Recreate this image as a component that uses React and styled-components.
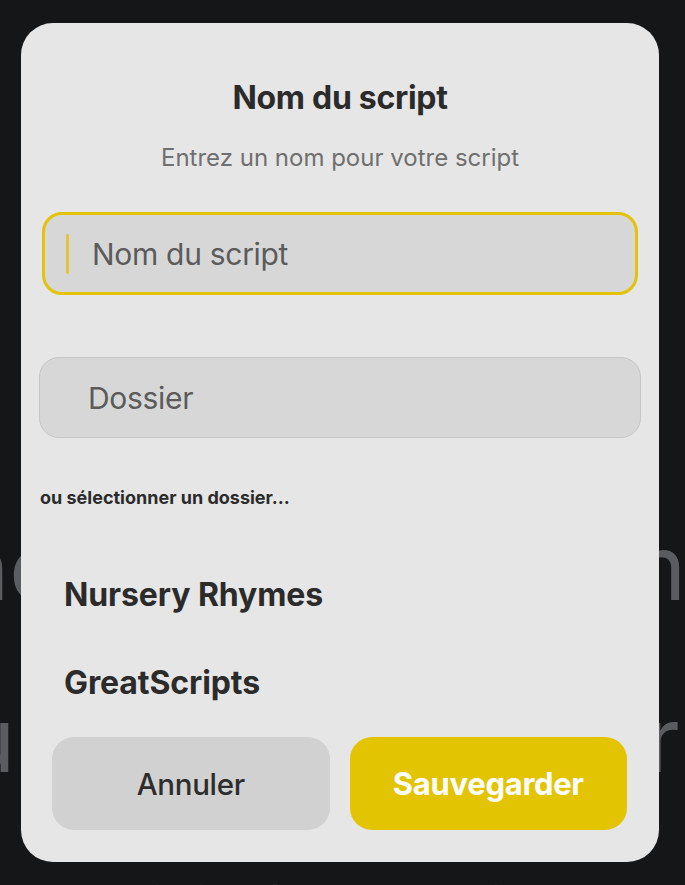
import React from 'react';
import styled, { createGlobalStyle } from 'styled-components';

const GlobalStyle = createGlobalStyle`
  html, body {
    margin: 0;
    padding: 0;
    background: #151618;
  }
  * {
    box-sizing: border-box;
  }
`;

const Screen = styled.div`
  position: relative;
  width: 685px;
  height: 885px;
  overflow: hidden;
  background: #151618;
  font-family: Inter, 'Noto Sans', sans-serif;
`;

// page content sitting under the dialog, only its edges show
const Behind = styled.div`
  position: absolute;
  inset: 0;
  display: flex;
  flex-direction: column;
  align-items: center;
  padding-top: 482px;
  color: #5b5c5f;
  white-space: nowrap;
`;

const BehindLine = styled.div`
  font-size: ${p => p.size || 90}px;
  line-height: ${p => p.lh || 172}px;
`;

const Modal = styled.div`
  position: relative;
  margin: 23px 0 0 21px;
  width: 638px;
  height: 839px;
  border-radius: 32px;
  background: #e6e6e6;
  display: flex;
  flex-direction: column;
`;

const Title = styled.h1`
  margin: 56px 0 0;
  text-align: center;
  font-size: 32px;
  line-height: 38px;
  font-weight: 700;
  color: #2b2b2b;
  letter-spacing: -0.3px;
`;

const Subtitle = styled.p`
  margin: 27px 0 0;
  text-align: center;
  font-size: 24px;
  line-height: 28px;
  color: #6f6f6f;
`;

const Field = styled.div`
  display: flex;
  align-items: center;
  margin: ${p => p.$m};
  height: ${p => p.$h}px;
  border-radius: 20px;
  background: #d7d7d7;
  border: ${p => (p.$focused ? '3px solid #e4c20c' : '1px solid #c6c6c6')};
  padding-left: ${p => p.$pad}px;
`;

const Caret = styled.span`
  width: 3px;
  height: 40px;
  border-radius: 2px;
  background: #e4c43a;
  margin-right: 23px;
`;

const Placeholder = styled.span`
  font-size: 30px;
  color: #5b5b5b;
  letter-spacing: -0.3px;
`;

const Hint = styled.div`
  margin: 48px 0 0 19px;
  font-size: 18px;
  line-height: 24px;
  font-weight: 700;
  color: #2b2b2b;
`;

const FolderList = styled.div`
  margin-top: 40px;
  display: flex;
  flex-direction: column;
`;

const FolderRow = styled.div`
  height: 88px;
  display: flex;
  align-items: center;
  padding-left: 43px;
  font-size: 32px;
  font-weight: 700;
  color: #2b2b2b;
  letter-spacing: -0.1px;
`;

const Actions = styled.div`
  margin: 11px 32px 0 31px;
  display: grid;
  grid-template-columns: 1fr 1fr;
  gap: 20px;
`;

const Button = styled.button`
  height: 93px;
  border: none;
  border-radius: 22px;
  font-family: inherit;
  font-size: ${p => (p.$primary ? 31 : 29.5)}px;
  font-weight: ${p => (p.$primary ? 700 : 500)};
  background: ${p => (p.$primary ? '#e3c402' : '#d1d1d1')};
  color: ${p => (p.$primary ? '#ffffff' : '#2d2d2d')};
  letter-spacing: -0.3px;
`;

export default function App() {
  const folders = ['Nursery Rhymes', 'GreatScripts'];
  return (
    <>
      <GlobalStyle />
      <Screen>
        <Behind>
          <BehindLine>ouvrez une scène ou commencez à</BehindLine>
          <BehindLine>nouveau ou commencer avec ce</BehindLine>
          <BehindLine size={40} lh={150}>Bibliothèque de scripts</BehindLine>
        </Behind>
        <Modal>
          <Title>Nom du script</Title>
          <Subtitle>Entrez un nom pour votre script</Subtitle>
          <Field $m="40px 21px 0" $h={83} $focused $pad={21}>
            <Caret />
            <Placeholder>Nom du script</Placeholder>
          </Field>
          <Field $m="62px 18px 0" $h={81} $pad={48}>
            <Placeholder>Dossier</Placeholder>
          </Field>
          <Hint>ou sélectionner un dossier...</Hint>
          <FolderList>
            {folders.map(f => (
              <FolderRow key={f}>{f}</FolderRow>
            ))}
          </FolderList>
          <Actions>
            <Button>Annuler</Button>
            <Button $primary>Sauvegarder</Button>
          </Actions>
        </Modal>
      </Screen>
    </>
  );
}
